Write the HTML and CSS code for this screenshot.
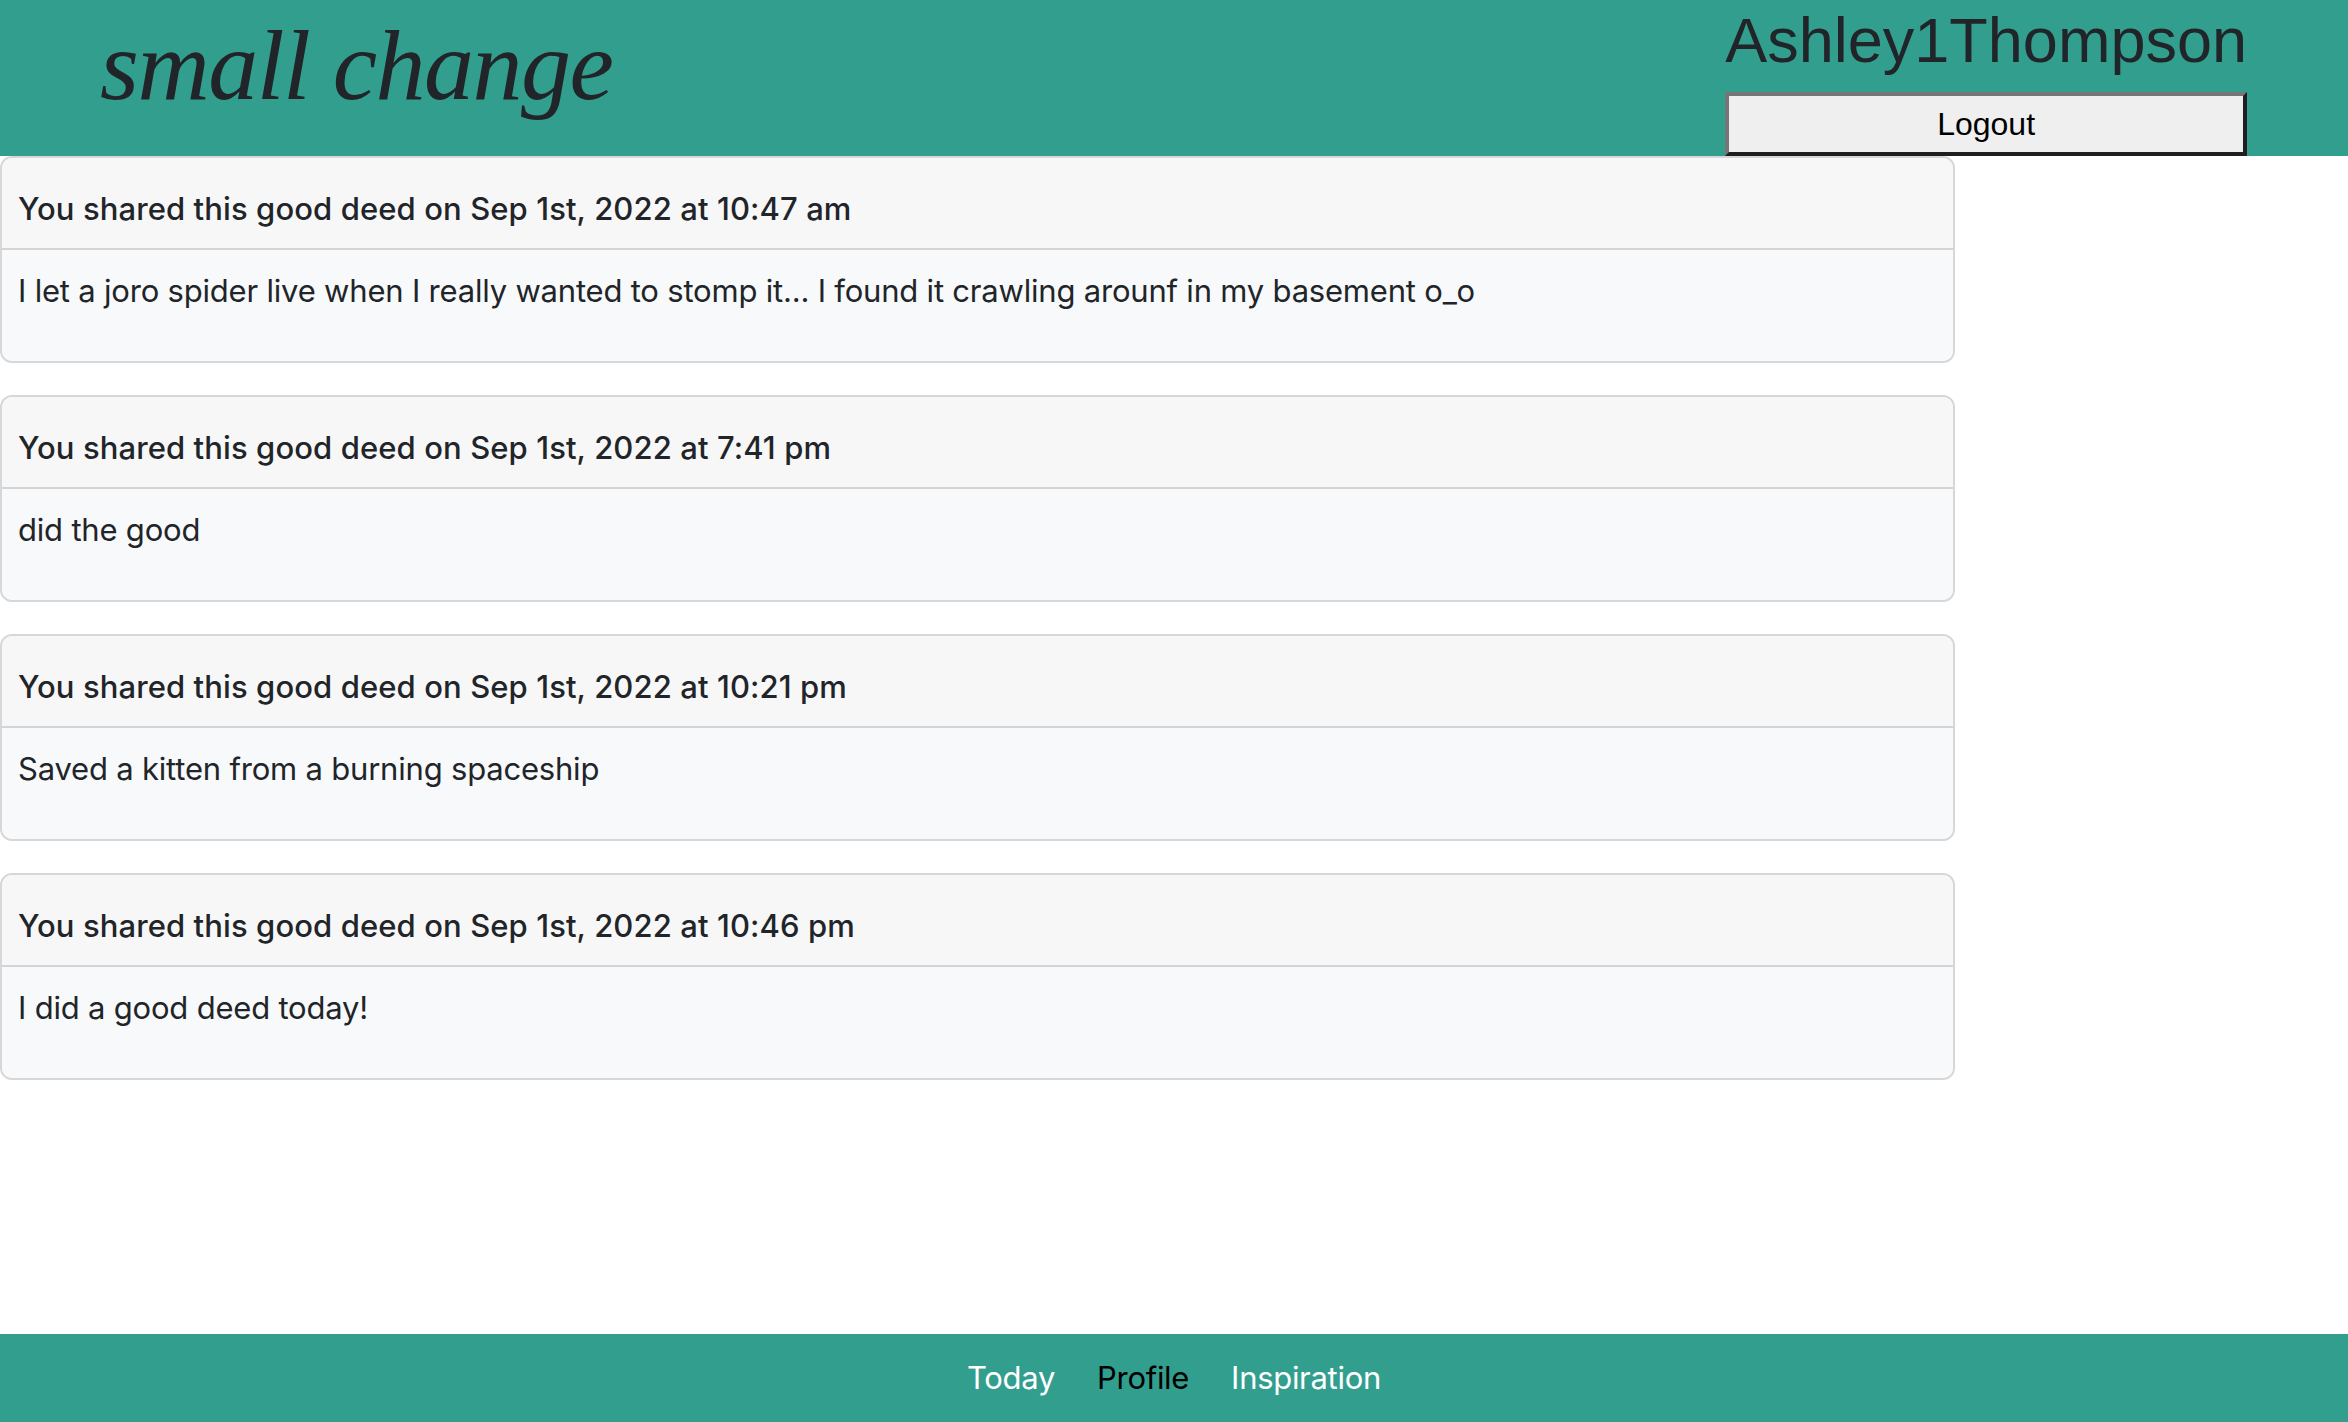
FILE: index.html
```html
<!DOCTYPE html>
<html lang="en">
<head>
<meta charset="utf-8">
<title>small change</title>
<link rel="stylesheet" href="styles.css">
</head>
<body>
<div class="page">
  <header class="site-header">
    <div class="brand">small change</div>
    <div class="account">
      <h2 class="username">Ashley1Thompson</h2>
      <button class="logout" type="button">Logout</button>
    </div>
  </header>

  <main class="deeds">
    <article class="deed-card">
      <div class="deed-header">You shared this good deed on Sep 1st, 2022 at 10:47 am</div>
      <div class="deed-body"><p>I let a joro spider live when I really wanted to stomp it... I found it crawling arounf in my basement o_o</p></div>
    </article>
    <article class="deed-card">
      <div class="deed-header">You shared this good deed on Sep 1st, 2022 at 7:41 pm</div>
      <div class="deed-body"><p>did the good</p></div>
    </article>
    <article class="deed-card">
      <div class="deed-header">You shared this good deed on Sep 1st, 2022 at 10:21 pm</div>
      <div class="deed-body"><p>Saved a kitten from a burning spaceship</p></div>
    </article>
    <article class="deed-card">
      <div class="deed-header">You shared this good deed on Sep 1st, 2022 at 10:46 pm</div>
      <div class="deed-body"><p>I did a good deed today!</p></div>
    </article>
  </main>

  <footer class="site-footer">
    <nav class="footer-nav">
      <a class="nav-link" href="#">Today</a>
      <a class="nav-link active" href="#">Profile</a>
      <a class="nav-link" href="#">Inspiration</a>
    </nav>
  </footer>
</div>
</body>
</html>
```

FILE: styles.css
```css
html, body {
  margin: 0;
  padding: 0;
}

body {
  font-family: Inter, "Noto Sans", "DejaVu Sans", sans-serif;
  color: #212529;
  background: #ffffff;
}

.page {
  min-height: 100vh;
  display: flex;
  flex-direction: column;
}

/* ---------- header ---------- */
.site-header {
  background: #329e8e;
  display: flex;
  justify-content: space-between;
  align-items: flex-start;
  padding: 2px 101px 0 100px;
  height: 156px;
  box-sizing: border-box;
}

.brand {
  font-family: "Liberation Serif", "Times New Roman", serif;
  font-style: italic;
  font-size: 100px;
  line-height: 100px;
  letter-spacing: -1.5px;
  color: #212529;
  margin-top: 14px;
}

.account {
  display: flex;
  flex-direction: column;
}

.username {
  margin: 0;
  font-family: "Liberation Sans", Arial, sans-serif;
  font-weight: 400;
  font-size: 63px;
  line-height: 76px;
  color: #212529;
}

.logout {
  margin-top: 14px;
  width: 100%;
  height: 64px;
  box-sizing: border-box;
  background: #efefef;
  color: #000000;
  font-family: "Liberation Sans", Arial, sans-serif;
  font-size: 32px;
  padding: 0;
  border-style: solid;
  border-width: 4px;
  border-color: #767676 #1f1f1f #1f1f1f #767676;
}

/* ---------- cards ---------- */
.deeds {
  flex: 1;
  width: 1955px;
}

.deed-card {
  border: 2px solid #d6d7d8;
  border-radius: 12px;
  overflow: hidden;
  margin-bottom: 32px;
  background: #f8f9fa;
}

.deed-header {
  background: #f7f7f7;
  border-bottom: 2px solid #d4d4d4;
  padding: 27px 16px 15px;
  font-size: 31px;
  line-height: 48px;
  font-weight: 500;
  letter-spacing: 0.1px;
}

.deed-body {
  padding: 17px 16px 46px;
  background: #f8f9fa;
}

.deed-body p {
  margin: 0;
  font-size: 31px;
  line-height: 48px;
  font-weight: 400;
  letter-spacing: -0.2px;
}

/* ---------- footer ---------- */
.site-footer {
  background: #329e8e;
  height: 88px;
  display: flex;
  align-items: center;
  justify-content: center;
}

.footer-nav {
  display: flex;
  gap: 42px;
}

.nav-link {
  font-size: 31px;
  line-height: 48px;
  color: #ffffff;
  text-decoration: none;
  letter-spacing: -0.3px;
}

.nav-link.active {
  color: #000000;
}
```
